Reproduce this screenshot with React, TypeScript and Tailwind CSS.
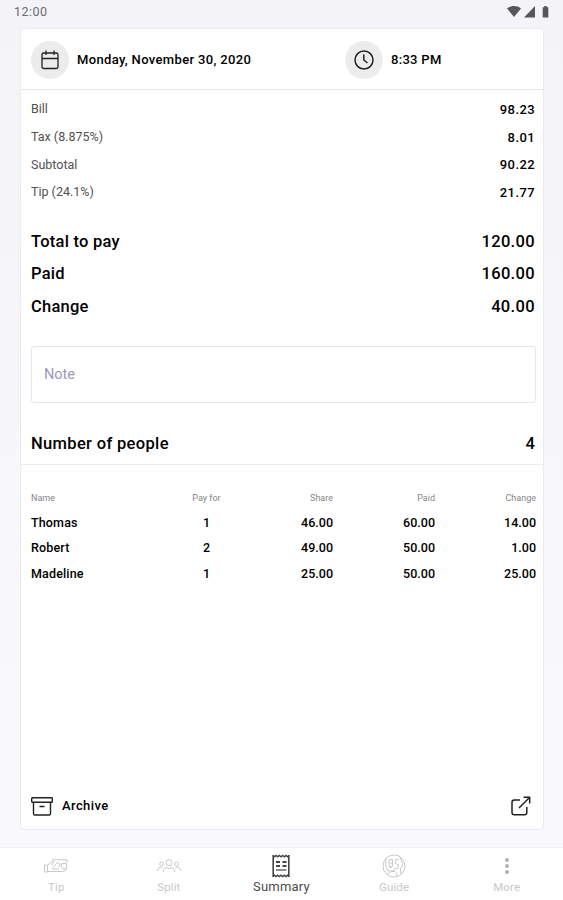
import type { ReactNode } from "react";

const charges = [
  { label: "Bill", value: "98.23" },
  { label: "Tax (8.875%)", value: "8.01" },
  { label: "Subtotal", value: "90.22" },
  { label: "Tip (24.1%)", value: "21.77" },
];

const totals = [
  { label: "Total to pay", value: "120.00" },
  { label: "Paid", value: "160.00" },
  { label: "Change", value: "40.00" },
];

const people = [
  { name: "Thomas", payFor: 1, share: "46.00", paid: "60.00", change: "14.00" },
  { name: "Robert", payFor: 2, share: "49.00", paid: "50.00", change: "1.00" },
  { name: "Madeline", payFor: 1, share: "25.00", paid: "50.00", change: "25.00" },
];

function StatusBar() {
  return (
    <div className="flex h-[28px] shrink-0 items-start justify-between pl-[14px] pr-[13px] pt-1 text-[#6c6c70]">
      <span className="text-[12.500px] leading-4 tracking-[0.5px]">12:00</span>
      <svg width="43" height="14" viewBox="0 0 43 14" fill="#57575b" className="mt-0.5">
        <path d="M0 2.400C4.300-.8 9.700-.8 14 2.400L7 11Z" />
        <path d="M28 0v11.500H17Z" />
        <path d="M35.700 1.200h1.500V0h2.600v1.200h1.500v10.300h-5.600Z" />
      </svg>
    </div>
  );
}

function CalendarIcon() {
  return (
    <svg width="18" height="20" viewBox="0 0 18 20" fill="none" stroke="#222" strokeWidth="1.300">
      <rect x="1" y="3" width="16" height="15.500" rx="1.800" />
      <path d="M1 8.500h16M5 .5v4.500M13 .5v4.500" />
    </svg>
  );
}

function ClockIcon() {
  return (
    <svg width="20" height="20" viewBox="0 0 20 20" fill="none" stroke="#222" strokeWidth="1.500">
      <circle cx="10" cy="10" r="9" />
      <path d="M9.800 4.500V10l3.700 3" />
    </svg>
  );
}

function ArchiveIcon() {
  return (
    <svg width="22" height="19" viewBox="0 0 22 19" fill="none" stroke="#222" strokeWidth="1.400">
      <rect x=".7" y=".7" width="20.600" height="4.600" rx=".6" />
      <path d="M2.500 5.300v11.400q0 1.300 1.300 1.300h14.400q1.300 0 1.300-1.300V5.300M8.500 9.500h5" />
    </svg>
  );
}

function ShareIcon() {
  return (
    <svg width="20" height="20" viewBox="0 0 20 20" fill="none" stroke="#222" strokeWidth="1.500">
      <path d="M9 4H3.300Q1 4 1 6.300v10.200q0 2.300 2.300 2.300h10.200q2.300 0 2.300-2.300V11" />
      <path d="M8 12 18.500 1.500M12.500 1.300h6.200v6.200" />
    </svg>
  );
}

function TipIcon() {
  return (
    <svg width="24" height="14" viewBox="0 0 24 14" fill="none" stroke="currentColor" strokeWidth="1">
      <path d="M.5 6h3v7h-3ZM3.500 6.500 8 2.500q1.500-1 2 .2L7.500 6M3.500 12.500h15.200q4-.4 4.300-4" />
      <path d="M8 .8h15v2.700M8.500 8.500 13 4q2-1.200 3 1.500l-1.500 3M17.500 4.500h5v3q-.5 2.500-2.500 2.500t-2.500-2.500Z" />
      <path d="M8 10h7" />
    </svg>
  );
}

function SplitIcon() {
  return (
    <svg width="24" height="14" viewBox="0 0 24 14" fill="none" stroke="currentColor" strokeWidth="1">
      <circle cx="12" cy="3.700" r="3" />
      <circle cx="4.500" cy="5" r="1.900" />
      <circle cx="19.500" cy="5" r="1.900" />
      <path d="M6.500 13V11.500q.4-2.500 3.500-3l2 1.500 2-1.500q3.100.5 3.500 3V13M.5 12q0-3.500 3-4l2 .8M23.500 12q0-3.500-3-4l-2 .8" />
    </svg>
  );
}

function SummaryIcon() {
  return (
    <svg width="18" height="24" viewBox="0 0 18 24" fill="none" stroke="#444">
      <path d="M1.200 1v22M16.800 1v22" strokeWidth="1.600" />
      <path d="m1 1.500 1.500 1.300L4 1.500l1.700 1.300 1.600-1.300L9 2.800l1.700-1.300 1.600 1.300L14 1.500l1.500 1.300L17 1.500M1 22.500l1.500-1.300L4 22.500l1.700-1.300 1.600 1.300L9 21.200l1.700 1.300 1.600-1.300 1.700 1.300 1.500-1.300 1.500 1.300" strokeWidth="1.400" />
      <path d="M4 8h4M10.500 8h4M4 12h4M10.500 12h4" strokeWidth="1.900" />
      <path d="M4 16h10.500" strokeWidth="1.200" />
    </svg>
  );
}

function GuideIcon() {
  return (
    <svg width="24" height="24" viewBox="0 0 24 24" fill="none" stroke="currentColor" strokeWidth="1">
      <circle cx="12" cy="12" r="11" />
      <path d="M4 4.500q-1.500 7 1 11.500 3.500 2 7 .5 3 1.500 3 6M5 20.500q3-3.500 8-3.500M17.500 2.500q3 4 3 8.500l-2 4 .5 5" />
      <path d="M7 5.500v7l3 2M7 5.500h3.500v3.500H7.500M10.500 9v3.500H7.500M17 5l-3.500 1.500v3l3 1.500-1 3.500-4 .5M13 6.500l2-2" />
    </svg>
  );
}

function MoreIcon() {
  return (
    <svg width="6" height="18" viewBox="0 0 6 18" fill="#b2b2b2">
      <circle cx="3" cy="3" r="2" />
      <circle cx="3" cy="9" r="2" />
      <circle cx="3" cy="15" r="2" />
    </svg>
  );
}

function Tab({ label, active, children }: { label: string; active?: boolean; children: ReactNode }) {
  return (
    <div className={`flex flex-1 flex-col items-center pt-[5px] ${active ? "text-[#4c4c4c]" : "text-[#c9c9c9]"}`}>
      <div className="flex h-[25px] items-center">{children}</div>
      <span className={`leading-[18px] ${active ? "text-[13px] tracking-[0.2px]" : "text-[11.500px] tracking-[0.1px]"}`}>{label}</span>
    </div>
  );
}

export default function App() {
  return (
    <div className="flex h-[900px] w-[563px] flex-col overflow-hidden bg-linear-to-b from-[#f3f3f8] to-[#f9f9fe] font-['Roboto',sans-serif] text-black">
      <StatusBar />

      <main className="ml-5 mr-[19px] flex h-[802px] flex-col rounded-[4px] border border-[#ebebef] bg-white">
        <header className="flex h-[61px] shrink-0 items-center border-b border-[#e6e6e8] pl-[10px] pt-[2px] text-[13px] font-medium">
          <div className="flex w-[314px] items-center gap-2">
            <div className="flex size-[38px] items-center justify-center rounded-full bg-[#ececec]"><CalendarIcon /></div>
            <span className="tracking-[0.340px]">Monday, November 30, 2020</span>
          </div>
          <div className="flex items-center gap-2">
            <div className="flex size-[38px] items-center justify-center rounded-full bg-[#ececec]"><ClockIcon /></div>
            <span className="tracking-[0.3px]">8:33 PM</span>
          </div>
        </header>

        <dl className="mt-[6px] pl-[10px] pr-[8px]">
          {charges.map((row) => (
            <div key={row.label} className="flex h-[27.600px] items-center justify-between">
              <dt className="text-[12.500px] text-[#505050]">{row.label}</dt>
              <dd className="text-[13px] font-medium tracking-[0.4px]">{row.value}</dd>
            </div>
          ))}
        </dl>

        <dl className="mt-[20px] pl-[10px] pr-[8px] font-medium">
          {totals.map((row) => (
            <div key={row.label} className="flex h-[32.300px] items-center justify-between">
              <dt className="text-[16.500px] tracking-[0.25px]">{row.label}</dt>
              <dd className="text-[16.500px] tracking-[0.35px]">{row.value}</dd>
            </div>
          ))}
        </dl>

        <div className="ml-[10px] mr-[7px] mt-[23px] flex h-[57px] shrink-0 items-center rounded-[3px] border border-[#e6e6e8] pl-3 pt-px text-[14.500px] text-[#9a99bd]">
          Note
        </div>

        <div className="mt-[20px] flex h-[42px] shrink-0 items-center justify-between border-b border-[#ebebed] pl-[10px] pr-[8px] pt-[2px] text-[16.500px] font-medium">
          <span className="tracking-[0.340px]">Number of people</span>
          <span>4</span>
        </div>

        <table className="ml-[10px] mr-[7px] mt-[22px] table-fixed text-right text-[12.500px] font-medium">
          <colgroup>
            <col className="w-[125px]" />
            <col className="w-[101px]" />
            <col className="w-[76px]" />
            <col className="w-[102px]" />
            <col className="w-[101px]" />
          </colgroup>
          <thead>
            <tr className="h-[23px] text-[9px] text-[#858585]">
              <th className="text-left font-normal">Name</th>
              <th className="text-center font-normal">Pay for</th>
              <th className="font-normal">Share</th>
              <th className="font-normal">Paid</th>
              <th className="font-normal">Change</th>
            </tr>
          </thead>
          <tbody>
            {people.map((p) => (
              <tr key={p.name} className="h-[25.300px]">
                <td className="pt-px text-left tracking-[0.15px]">{p.name}</td>
                <td className="pt-px text-center">{p.payFor}</td>
                <td className="pt-px">{p.share}</td>
                <td className="pt-px">{p.paid}</td>
                <td className="pt-px">{p.change}</td>
              </tr>
            ))}
          </tbody>
        </table>

        <footer className="mb-[13px] mt-auto flex items-center justify-between pl-[10px] pr-[12px]">
          <div className="flex items-center gap-[9px]">
            <ArchiveIcon />
            <span className="text-[13px] font-medium tracking-[0.4px]">Archive</span>
          </div>
          <ShareIcon />
        </footer>
      </main>

      <nav className="mt-auto flex h-[53px] shrink-0 border-t border-[#f0f0f3] bg-white">
        <Tab label="Tip"><TipIcon /></Tab>
        <Tab label="Split"><SplitIcon /></Tab>
        <Tab label="Summary" active><SummaryIcon /></Tab>
        <Tab label="Guide"><GuideIcon /></Tab>
        <Tab label="More"><MoreIcon /></Tab>
      </nav>
    </div>
  );
}
